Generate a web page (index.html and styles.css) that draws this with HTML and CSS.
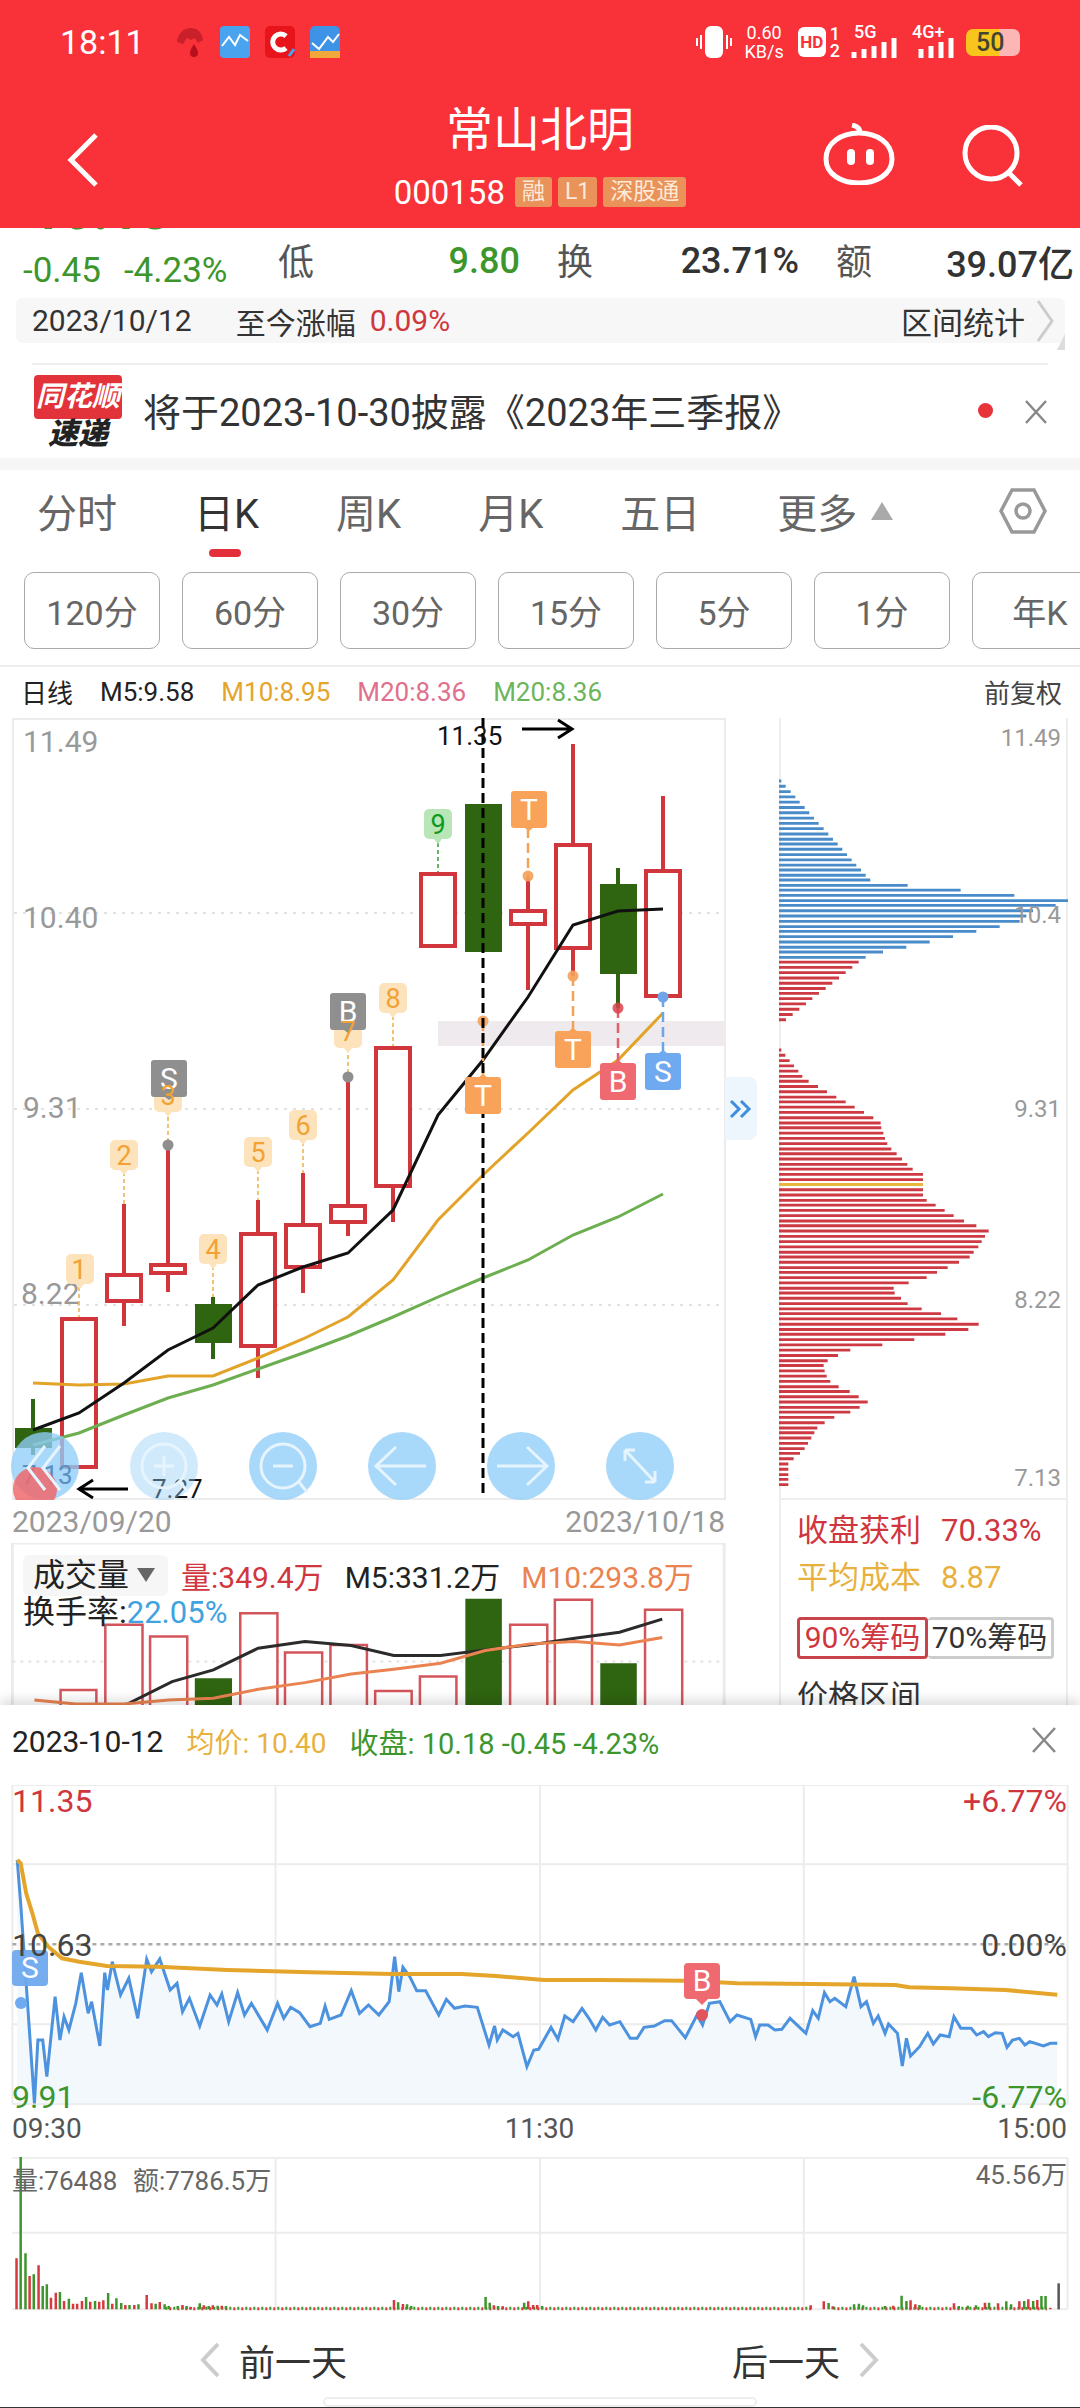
FILE: index.html
```html
<!DOCTYPE html>
<html lang="zh-CN">
<head>
    <meta charset="UTF-8">
    <meta name="viewport" content="width=device-width, initial-scale=1.0">
    <title>常山北明 000158</title>
    <link rel="stylesheet" href="styles.css">
</head>
<body>
    <header class="top">
        <div class="status-bar">
            <span class="clock">18:11</span>
            <div class="app-icons">
                <svg width="30" height="32" viewBox="0 0 30 32"><path d="M2 16C3 6 10 2 16 2s11 4 12 12l-5 3-3-5-4 2-4-2-4 6z" fill="#c9202a"/><path d="M19 18c3 5 4 7 4 9a4 4 0 0 1-8 0c0-2 1-4 4-9z" fill="#b5101c"/></svg>
                <svg width="30" height="32" viewBox="0 0 30 32"><rect width="30" height="32" rx="4" fill="#4aa3ee"/><path d="M2 20l7-9 6 8 5-10 8 6" fill="none" stroke="#fff" stroke-width="2"/></svg>
                <svg width="30" height="32" viewBox="0 0 30 32"><rect width="30" height="32" rx="5" fill="#e8141c"/><path d="M21 10a8 8 0 1 0 0 12" fill="none" stroke="#fff" stroke-width="5"/><path d="M24 30l5-7" stroke="#4aa3ee" stroke-width="3"/></svg>
                <svg width="30" height="32" viewBox="0 0 30 32"><rect width="30" height="32" rx="5" fill="#3f93e6"/><rect y="25" width="30" height="7" fill="#f0a83a"/><path d="M2 17l7 6 9-12 5 5 6-8" fill="none" stroke="#fff" stroke-width="2"/></svg>
            </div>
            <div class="sys-icons">
                <svg width="36" height="32" viewBox="0 0 36 32"><rect x="9" y="0" width="18" height="32" rx="6" fill="#fff"/><path d="M1 12v8M5 9v14M31 9v14M35 12v8" stroke="#fff" stroke-width="2"/></svg>
                <div class="speed"><span>0.60</span><span>KB/s</span></div>
                <span class="hd">HD</span>
                <div class="sim-no"><span>1</span><span>2</span></div>
                <div class="signal">
                    <span class="net">5G</span>
                    <svg width="46" height="20" viewBox="0 0 46 20"><path d="M3 14v6M13 11v9M23 8v12M33 4v16M43 0v20" stroke="#fff" stroke-width="5"/></svg>
                </div>
                <div class="signal sig-two">
                    <span class="net">4G+</span>
                    <svg width="38" height="20" viewBox="0 0 38 20"><path d="M3 11v9M13 8v12M23 4v16M33 0v20" stroke="#fff" stroke-width="5"/></svg>
                </div>
                <span class="battery">50</span>
            </div>
        </div>
        <div class="nav">
            <svg class="back" width="34" height="56" viewBox="0 0 34 56"><path d="M30 3L5 28l25 25" fill="none" stroke="#fff" stroke-width="5"/></svg>
            <div class="stock">
                <h1>常山北明</h1>
                <div class="stock-code">
                    <span class="code">000158</span>
                    <span class="flag">融</span>
                    <span class="flag">L1</span>
                    <span class="flag">深股通</span>
                </div>
            </div>
            <div class="nav-icons">
                <svg class="robot" width="72" height="62" viewBox="0 0 72 62"><path d="M3 36C3 20 18 10 36 10s33 10 33 26c0 15-15 24-33 24S3 51 3 36z" fill="none" stroke="#fff" stroke-width="5"/><path d="M37 10c0-4-3-7-8-8" fill="none" stroke="#fff" stroke-width="5"/><rect x="24" y="26" width="8" height="16" rx="4" fill="#fff"/><rect x="43" y="26" width="8" height="16" rx="4" fill="#fff"/></svg>
                <svg width="64" height="62" viewBox="0 0 64 62"><circle cx="30" cy="28" r="26" fill="none" stroke="#fff" stroke-width="5"/><path d="M46 46l14 14" stroke="#fff" stroke-width="5"/></svg>
            </div>
        </div>
    </header>

    <section class="quote">
        <div class="quote-left">
            <div class="price">10.18</div>
            <div class="change"><span>-0.45</span><span>-4.23%</span></div>
        </div>
        <div class="stat"><span class="stat-label">低</span><span class="stat-value green">9.80</span></div>
        <div class="stat"><span class="stat-label">换</span><span class="stat-value">23.71%</span></div>
        <div class="stat stat-last"><span class="stat-label">额</span><span class="stat-value">39.07亿</span></div>
    </section>

    <div class="range-bar">
        <span class="range-date">2023/10/12</span>
        <span class="range-label">至今涨幅</span>
        <span class="red">0.09%</span>
        <span class="range-link">区间统计</span>
        <svg width="20" height="44" viewBox="0 0 20 44"><path d="M3 2l14 20L3 42" fill="none" stroke="#ccc" stroke-width="3"/></svg>
    </div>

    <div class="news">
        <div class="news-logo">
            <span class="logo-top">同花顺</span>
            <span class="logo-bottom">速递</span>
        </div>
        <span class="news-text">将于2023-10-30披露《2023年三季报》</span>
        <span class="news-dot"></span>
        <svg width="24" height="24" viewBox="0 0 24 24"><path d="M2 1l20 22M22 1L2 23" stroke="#888" stroke-width="2.5"/></svg>
    </div>

    <nav class="tabs">
        <span class="tab">分时</span>
        <span class="tab active">日K</span>
        <span class="tab">周K</span>
        <span class="tab">月K</span>
        <span class="tab">五日</span>
        <span class="tab">更多<i class="tab-caret"></i></span>
        <svg class="tab-gear" width="50" height="48" viewBox="0 0 50 48"><path d="M14 3h22l11 21-11 21H14L3 24z" fill="none" stroke="#999" stroke-width="3.5"/><circle cx="25" cy="24" r="7" fill="none" stroke="#999" stroke-width="3.5"/></svg>
    </nav>

    <div class="periods">
        <button class="period">120分</button>
        <button class="period">60分</button>
        <button class="period">30分</button>
        <button class="period">15分</button>
        <button class="period">5分</button>
        <button class="period">1分</button>
        <button class="period">年K</button>
    </div>

    <div class="legend">
        <span class="legend-name">日线</span>
        <span>M5:9.58</span>
        <span class="c-orange">M10:8.95</span>
        <span class="c-pink">M20:8.36</span>
        <span class="c-green">M20:8.36</span>
        <span class="legend-right">前复权</span>
    </div>

    <div class="chart-row">
        <div class="chart-left">
            <svg class="kline" width="760" height="782" viewBox="0 718 760 782">
                <defs>
                    <symbol id="tag" viewBox="0 0 28 36" width="28" height="36" overflow="visible">
                        <path d="M5 0h18a5 5 0 0 1 5 5v20a5 5 0 0 1-5 5h-5l-4 5-4-5H5a5 5 0 0 1-5-5V5a5 5 0 0 1 5-5z"/>
                    </symbol>
                    <symbol id="flag-down" viewBox="0 0 36 40" width="36" height="40" overflow="visible">
                        <path d="M3 0h30a3 3 0 0 1 3 3v31a3 3 0 0 1-3 3H22l-4 3-4-3H3a3 3 0 0 1-3-3V3a3 3 0 0 1 3-3z"/>
                    </symbol>
                    <symbol id="flag-up" viewBox="0 0 36 40" width="36" height="40" overflow="visible">
                        <path d="M3 3h11l4-3 4 3h11a3 3 0 0 1 3 3v31a3 3 0 0 1-3 3H3a3 3 0 0 1-3-3V6a3 3 0 0 1 3-3z"/>
                    </symbol>
                </defs>
                <rect class="frame" x="13" y="719" width="712" height="780"/>
                <path class="grid-dots" d="M14 913H724M14 1109H724M14 1305H724"/>
                <rect class="band" x="438" y="1021" width="287" height="25"/>
                <text class="axis" x="23" y="752">11.49</text>
                <text class="axis" x="23" y="928">10.40</text>
                <text class="axis" x="23" y="1118">9.31</text>
                <text class="axis" x="21" y="1304">8.22</text>

                <path class="wick-dn" d="M33 1399V1455M213 1297V1359M483 804V952M618 868V1008"/>
                <path class="wick-up" d="M124 1204V1326M168 1145V1292M258 1200V1378M303 1173V1293M348 1077V1236M393 1186V1222M528 877V990M573 744V976M663 796V871"/>
                <rect class="body-dn" x="15" y="1428" width="37" height="20"/>
                <rect class="body-dn" x="195" y="1304" width="37" height="39"/>
                <rect class="body-dn" x="465" y="804" width="37" height="148"/>
                <rect class="body-dn" x="600" y="884" width="37" height="90"/>
                <rect class="body-up" x="62" y="1319" width="34" height="148"/>
                <rect class="body-up" x="107" y="1275" width="34" height="26"/>
                <rect class="body-up" x="151" y="1265" width="34" height="8"/>
                <rect class="body-up" x="241" y="1234" width="34" height="112"/>
                <rect class="body-up" x="286" y="1225" width="34" height="42"/>
                <rect class="body-up" x="331" y="1206" width="34" height="16"/>
                <rect class="body-up" x="376" y="1048" width="34" height="138"/>
                <rect class="body-up" x="421" y="874" width="34" height="72"/>
                <rect class="body-up" x="511" y="911" width="34" height="13"/>
                <rect class="body-up" x="556" y="845" width="34" height="103"/>
                <rect class="body-up" x="646" y="871" width="34" height="125"/>

                <polyline class="ma ma20" points="33,1445 79,1433 124,1415 168,1398 213,1385 258,1369 303,1353 348,1336 393,1317 438,1297 483,1278 528,1260 573,1235 618,1217 663,1194"/>
                <polyline class="ma ma10" points="33,1383 79,1385 124,1384 168,1376 213,1376 258,1358 303,1339 348,1317 393,1280 438,1220 483,1175 528,1133 573,1090 618,1060 663,1013"/>
                <polyline class="ma ma5" points="33,1430 79,1413 124,1383 168,1350 213,1328 258,1285 303,1267 348,1253 393,1210 438,1115 483,1060 528,997 573,925 618,911 663,909"/>

                <path class="tail tail-o" d="M79 1287V1317M124 1172V1204M213 1266V1297M258 1170V1200M303 1142V1173M393 1016V1046M168 1110V1145M348 1048V1077"/>
                <path class="tail tail-g" d="M438 843V872"/>
                <path class="tail tail-t" d="M528 828V877M573 976V1031M483 1021V1077"/>
                <path class="tail tail-b" d="M618 1008V1063"/>
                <path class="tail tail-s" d="M663 997V1053"/>
                <circle class="dot-o" cx="528" cy="876" r="5.5"/>
                <circle class="dot-o" cx="573" cy="976" r="5.5"/>
                <circle class="dot-o" cx="483" cy="1021" r="5.5"/>
                <circle class="dot-r" cx="618" cy="1008" r="5.5"/>
                <circle class="dot-b" cx="663" cy="997" r="5.5"/>
                <circle class="dot-gray" cx="348" cy="1077" r="5.5"/>
                <circle class="dot-gray" cx="168" cy="1145" r="5.5"/>

                <path class="cross" d="M483 718V1496"/>

                <use class="tag-o" href="#tag" x="66" y="1254"/><text class="tag-no" x="79" y="1279">1</text>
                <use class="tag-o" href="#tag" x="110" y="1140"/><text class="tag-no" x="124" y="1165">2</text>
                <use class="tag-o" href="#tag" x="199" y="1234"/><text class="tag-no" x="213" y="1259">4</text>
                <use class="tag-o" href="#tag" x="244" y="1137"/><text class="tag-no" x="258" y="1162">5</text>
                <use class="tag-o" href="#tag" x="289" y="1110"/><text class="tag-no" x="303" y="1135">6</text>
                <use class="tag-o" href="#tag" x="379" y="983"/><text class="tag-no" x="393" y="1008">8</text>
                <use class="tag-g" href="#tag" x="424" y="809"/><text class="tag-no tag-no-g" x="438" y="834">9</text>

                <use class="tag-o" href="#tag" x="154" y="1082"/>
                <use class="tag-o" href="#tag" x="334" y="1018"/>
                <use class="flag-gray" href="#flag-down" x="330" y="993"/><text class="flag-text" x="348" y="1022">B</text>
                <use class="flag-gray" href="#flag-down" x="151" y="1060"/><text class="flag-text" x="169" y="1089">S</text>
                <text class="tag-no" x="168" y="1105">3</text>
                <text class="tag-no" x="348" y="1041">7</text>
                <use class="flag-orange" href="#flag-down" x="511" y="791"/><text class="flag-text" x="529" y="820">T</text>
                <use class="flag-orange" href="#flag-up" x="555" y="1028"/><text class="flag-text" x="573" y="1060">T</text>
                <use class="flag-orange" href="#flag-up" x="465" y="1074"/><text class="flag-text" x="483" y="1106">T</text>
                <use class="flag-red" href="#flag-up" x="600" y="1060"/><text class="flag-text" x="618" y="1092">B</text>
                <use class="flag-blue" href="#flag-up" x="645" y="1050"/><text class="flag-text" x="663" y="1082">S</text>

                <text class="hilo" x="437" y="745">11.35</text>
                <path class="hilo-arrow" d="M522 729H572M558 720l14 9-14 9"/>
                <text class="hilo" x="152" y="1498">7.27</text>
                <path class="hilo-arrow" d="M128 1489H79M93 1480l-14 9 14 9"/>

                <circle class="bubble" cx="45" cy="1466" r="34"/>
                <text class="bubble-no" x="22" y="1484">7.13</text>
                <circle class="bubble-red" cx="35" cy="1489" r="22"/>
                <path class="bubble-ico" d="M45 1446l-17 22 17 22M60 1446l-17 22 17 22"/>
                <circle class="bubble bubble-soft" cx="164" cy="1466" r="34"/>
                <g class="bubble-ico">
                    <circle cx="164" cy="1466" r="22"/><path d="M164 1456v20M154 1466h20M180 1482l8 10"/>
                </g>
                <circle class="bubble" cx="283" cy="1466" r="34"/>
                <g class="bubble-ico">
                    <circle cx="283" cy="1466" r="22"/><path d="M273 1466h20M299 1482l8 10"/>
                </g>
                <circle class="bubble" cx="402" cy="1466" r="34"/>
                <path class="bubble-ico" d="M376 1466h50M396 1447l-20 19 20 19"/>
                <circle class="bubble" cx="521" cy="1466" r="34"/>
                <path class="bubble-ico" d="M497 1466h50M527 1447l20 19-20 19"/>
                <circle class="bubble" cx="640" cy="1466" r="34"/>
                <path class="bubble-ico" d="M625 1450l30 32M625 1450v11M625 1450h10M655 1482v-11M655 1482h-10"/>

                <path class="side-tab" d="M725 1077h24a8 8 0 0 1 8 8v47a8 8 0 0 1-8 8h-24z"/>
                <path class="side-arrow" d="M731 1101l8 8-8 8M741 1101l8 8-8 8"/>
            </svg>

            <div class="chart-dates"><span>2023/09/20</span><span>2023/10/18</span></div>

            <div class="volume">
                <svg width="760" height="162" viewBox="0 130 1104 485" preserveAspectRatio="none">
                    <path class="vol-frame" d="M18 615V130H1052V615"/>
                    <path class="vol-dots" d="M18 485H1052"/>
                    <path class="vol-box" d="M88 615V570H140V615M153 615V375H207V615M218 615V410H272V615M349 615V340H403V615M414 615V458H468V615M480 615V435H533V615M545 615V573H598V615M610 615V530H663V615M741 615V375H795V615M806 615V300H860V615M937 615V330H991V615"/>
                    <path class="vol-solid" d="M283 535H337V615H283zM676 297H729V615H676zM872 490H925V615H872z"/>
                    <polyline class="vol-ma vol-ma-k" points="185,612 250,545 310,510 375,445 443,425 510,437 572,467 640,467 705,450 770,435 835,415 900,397 962,358"/>
                    <polyline class="vol-ma vol-ma-o" points="50,600 110,612 180,612 245,600 310,595 375,568 443,548 510,522 572,508 640,490 705,452 770,432 835,425 900,435 962,413"/>
                </svg>
                <div class="vol-head">
                    <span class="vol-select">成交量<i class="vol-caret"></i></span>
                    <span class="red">量:349.4万</span>
                    <span>M5:331.2万</span>
                    <span class="c-coral">M10:293.8万</span>
                </div>
                <div class="vol-rate">换手率:<span class="c-sky">22.05%</span></div>
            </div>
        </div>

        <aside class="chart-right">
            <div class="chips">
                <svg width="289" height="782" viewBox="118 33 867 1477" preserveAspectRatio="none">
                    <path class="chip-blue" d="M118 152H125M118 162H138M118 172H153M118 182H167M118 192H180M118 202H195M118 212H209M118 222H223M118 232H237M118 242H252M118 252H266M118 262H280M118 271H294M118 281H308M118 291H322M118 301H336M118 311H350M118 320H364M118 330H378M118 339H392M118 349H504M118 358H663M118 368H824M118 378H985M118 387H948M118 397H880M118 407H860M118 417H840M118 427H780M118 436H710M118 446H640M118 456H570M118 466H500M118 475H430M118 485H378"/>
                    <path class="chip-red" d="M118 494H357M118 504H338M118 514H318M118 524H298M118 534H278M118 544H258M118 553H238M118 563H218M118 573H199M118 583H179M118 593H159M118 603H139M118 660H125M118 670H137M118 680H150M118 690H163M118 700H176M118 710H188M118 719H207M118 729H235M118 739H262M118 749H290M118 758H318M118 768H345M118 778H373M118 788H401M118 798H423M118 807H425M118 817H431M118 827H436M118 837H443M118 847H455M118 856H471M118 866H487M118 876H503M118 885H519M118 895H550M118 905H550M118 924H550M118 934H550M118 944H561M118 953H588M118 963H615M118 973H642M118 983H673M118 992H710M118 1002H747M118 1012H736M118 1022H726M118 1032H716M118 1042H702M118 1051H690M118 1061H658M118 1071H624M118 1080H592M118 1090H561M118 1100H507M118 1110H462M118 1119H465M118 1129H484M118 1139H504M118 1149H546M118 1158H604M118 1168H653M118 1178H717M118 1188H686M118 1197H617M118 1207H524M118 1217H428M118 1227H332M118 1237H295M118 1247H264M118 1256H252M118 1266H255M118 1276H261M118 1286H272M118 1296H297M118 1305H330M118 1315H357M118 1325H384M118 1335H360M118 1344H332M118 1354H284M118 1364H255M118 1374H233M118 1383H224M118 1393H215M118 1403H205M118 1413H195M118 1422H181M118 1432H162M118 1442H146M118 1452H146M118 1462H146M118 1471H146M118 1481H146"/>
                    <path class="chip-avg" d="M118 914H550"/>
                </svg>
                <span class="chip-price chip-p1">11.49</span>
                <span class="chip-price chip-p2">10.4</span>
                <span class="chip-price chip-p3">9.31</span>
                <span class="chip-price chip-p4">8.22</span>
                <span class="chip-price chip-p5">7.13</span>
            </div>
            <div class="chip-info">
                <div class="chip-row red"><span>收盘获利</span><span>70.33%</span></div>
                <div class="chip-row c-gold"><span>平均成本</span><span>8.87</span></div>
                <div class="chip-toggle">
                    <span class="toggle-on">90%筹码</span>
                    <span class="toggle-off">70%筹码</span>
                </div>
                <div class="chip-range">价格区间</div>
            </div>
        </aside>
    </div>

    <section class="popup">
        <div class="popup-head">
            <span class="popup-date">2023-10-12</span>
            <span class="c-gold popup-avg">均价: 10.40</span>
            <span class="green">收盘: 10.18 -0.45 -4.23%</span>
            <svg class="popup-close" width="26" height="26" viewBox="0 0 26 26"><path d="M2 1l22 24M24 1L2 25" stroke="#888" stroke-width="2.5"/></svg>
        </div>

        <div class="intraday">
            <svg width="1080" height="322" viewBox="0 45 1568 966" preserveAspectRatio="none">
                <path class="line-soft" d="M18 45H1550M18 283H1550M18 763H1550M18 1002H1550M18 45V1002M400 45V1002M784 45V1002M1167 45V1002M1550 45V1002"/>
                <path class="fill-area" d="M25 270L30 400L38 640L50 1000L55 810L62 810L68 920L80 680L87 810L93 740L100 780L110 700L118 608L128 730L133 695L145 828L152 608L156 660L163 575L175 675L187 625L200 745L213 568L220 605L232 567L247 660L257 640L265 725L275 685L290 768L305 675L315 705L322 672L332 755L345 668L355 735L365 700L388 780L403 700L412 745L422 712L435 728L450 770L465 760L472 708L478 748L495 735L510 662L522 730L535 705L550 735L565 695L573 560L579 665L585 592L595 620L605 662L618 662L637 735L648 688L660 715L675 708L693 712L710 825L718 768L722 810L730 780L745 800L752 790L765 890L775 840L782 838L800 772L810 808L820 738L832 755L845 715L855 745L865 780L875 742L885 765L900 755L915 805L925 805L935 772L950 768L965 752L975 752L995 803L1012 735L1020 765L1030 700L1045 695L1060 755L1070 735L1090 748L1097 800L1103 765L1115 765L1125 780L1135 778L1147 745L1170 790L1180 722L1188 745L1197 668L1205 695L1212 685L1228 710L1240 620L1250 710L1258 695L1268 760L1275 738L1285 790L1290 762L1303 790L1310 888L1316 805L1322 858L1335 830L1347 790L1355 822L1365 795L1378 800L1385 740L1395 775L1410 775L1418 795L1428 785L1435 800L1445 788L1455 790L1462 832L1470 810L1480 805L1488 825L1495 815L1515 828L1525 820L1535 820V1000H25Z"/>
                <path class="line-base" d="M18 523H1550"/>
                <path class="line-price" d="M25 270L30 400L38 640L50 1000L55 810L62 810L68 920L80 680L87 810L93 740L100 780L110 700L118 608L128 730L133 695L145 828L152 608L156 660L163 575L175 675L187 625L200 745L213 568L220 605L232 567L247 660L257 640L265 725L275 685L290 768L305 675L315 705L322 672L332 755L345 668L355 735L365 700L388 780L403 700L412 745L422 712L435 728L450 770L465 760L472 708L478 748L495 735L510 662L522 730L535 705L550 735L565 695L573 560L579 665L585 592L595 620L605 662L618 662L637 735L648 688L660 715L675 708L693 712L710 825L718 768L722 810L730 780L745 800L752 790L765 890L775 840L782 838L800 772L810 808L820 738L832 755L845 715L855 745L865 780L875 742L885 765L900 755L915 805L925 805L935 772L950 768L965 752L975 752L995 803L1012 735L1020 765L1030 700L1045 695L1060 755L1070 735L1090 748L1097 800L1103 765L1115 765L1125 780L1135 778L1147 745L1170 790L1180 722L1188 745L1197 668L1205 695L1212 685L1228 710L1240 620L1250 710L1258 695L1268 760L1275 738L1285 790L1290 762L1303 790L1310 888L1316 805L1322 858L1335 830L1347 790L1355 822L1365 795L1378 800L1385 740L1395 775L1410 775L1418 795L1428 785L1435 800L1445 788L1455 790L1462 832L1470 810L1480 805L1488 825L1495 815L1515 828L1525 820L1535 820"/>
                <path class="line-avg" d="M25 270L30 280L38 370L47 430L55 490L70 530L90 565L115 575L155 588L230 590L330 600L450 607L570 612L670 612L720 618L790 630L870 630L1000 632L1070 640L1180 642L1300 645L1320 652L1380 655L1460 660L1535 674"/>
            </svg>
            <span class="mark mark-s">S</span>
            <span class="mark-dot mark-dot-s"></span>
            <span class="mark mark-b">B</span>
            <span class="mark-dot mark-dot-b"></span>
            <span class="lab lab-tl red">11.35</span>
            <span class="lab lab-tr red">+6.77%</span>
            <span class="lab lab-ml">10.63</span>
            <span class="lab lab-mr">0.00%</span>
            <span class="lab lab-bl green">9.91</span>
            <span class="lab lab-br green">-6.77%</span>
        </div>

        <div class="times"><span>09:30</span><span>11:30</span><span>15:00</span></div>

        <div class="minute-vol">
            <svg width="1080" height="155" viewBox="0 108 1568 465" preserveAspectRatio="none">
                <path class="line-soft" d="M18 110H1550M18 335H1550M18 565H1550M400 110V565M784 110V565M1167 110V565M1550 110V565"/>
                <path class="tick-g tick-base" d="M240 562H1180M1210 562H1520"/>
                <path class="tick-r tick-base tick-shift" d="M240 563H1180M1210 563H1520"/>
                <path class="tick-r" d="M24 565V412M43 565V465M56 565V433M74 565V530M81 565V515M93 565V540M106 565V548M112 565V548M119 565V540M131 565V542M144 565V542M150 565V538M163 565V548M182 565V552M195 565V552M213 565V522M220 565V547M232 565V543M265 565V552M277 565V558M296 565V553M309 565V553M322 565V554M572 565V537M585 565V549M717 565V553M730 565V556M767 565V541M774 565V552M780 565V552M1177 565V553M1196 565V541M1209 565V556M1297 565V554M1322 565V538M1329 565V550M1385 565V547M1430 565V545M1449 565V547M1480 565V541M1493 565V535M1506 565V537M1525 565V560"/>
                <path class="tick-g" d="M30 565V108M37 565V397M49 565V460M62 565V495M68 565V490M87 565V513M100 565V533M125 565V528M138 565V540M157 565V516M169 565V532M176 565V546M188 565V552M201 565V550M226 565V548M239 565V550M245 565V555M258 565V555M271 565V555M290 565V547M303 565V555M316 565V554M328 565V555M578 565V544M591 565V550M597 565V555M705 565V528M711 565V545M723 565V555M761 565V545M787 565V555M1203 565V546M1240 565V550M1247 565V548M1253 565V553M1285 565V555M1309 565V524M1316 565V540M1335 565V552M1392 565V555M1405 565V554M1417 565V553M1436 565V545M1461 565V541M1468 565V550M1487 565V540M1500 565V540M1512 565V525M1518 565V525"/>
                <path class="tick-k" d="M1537 565V487"/>
            </svg>
            <span class="mv-left">量:76488</span>
            <span class="mv-left mv-amount">额:7786.5万</span>
            <span class="mv-max">45.56万</span>
        </div>

        <div class="day-nav">
            <div class="day-btn">
                <svg width="22" height="36" viewBox="0 0 22 36"><path d="M19 2L4 18l15 16" fill="none" stroke="#ccc" stroke-width="4"/></svg>
                <span>前一天</span>
            </div>
            <div class="day-btn">
                <span>后一天</span>
                <svg width="22" height="36" viewBox="0 0 22 36"><path d="M3 2l15 16L3 34" fill="none" stroke="#ccc" stroke-width="4"/></svg>
            </div>
        </div>

        <div class="home-bar"></div>
    </section>
</body>
</html>
```

FILE: styles.css
```css
:root {
    --red: #d0363e;
    --green: #3c962c;
    --candle-red: #d2363d;
    --candle-green: #2f6410;
    --gold: #e5a52a;
    --line: #ececec;
}
* {
    box-sizing: border-box;
}
body {
    margin: 0;
    width: 1080px;
    height: 2408px;
    overflow: hidden;
    background: #fff;
    color: #333;
    font-family: Roboto, "Noto Sans CJK SC", sans-serif;
}
.red { color: var(--red); }
.green { color: var(--green); }
.c-orange { color: #e5a52a; }
.c-pink { color: #e0708c; }
.c-green { color: #6db55a; }
.c-coral { color: #ea8350; }
.c-sky { color: #3fa3e0; }
.c-gold { color: #e8b13e; }

/* header */
.top {
    position: relative;
    z-index: 2;
    height: 228px;
    background: #f93139;
    color: #fff;
}
.status-bar {
    display: flex;
    align-items: center;
    height: 84px;
    padding: 0 60px;
}
.clock {
    font-size: 34px;
    width: 115px;
}
.app-icons {
    display: flex;
    gap: 15px;
}
.sys-icons {
    display: flex;
    align-items: center;
    margin-left: auto;
}
.speed {
    display: flex;
    flex-direction: column;
    margin-left: 13px;
    font-size: 18px;
    line-height: 19px;
    text-align: center;
}
.hd {
    width: 28px;
    margin-left: 14px;
    border-radius: 6px;
    background: #fff;
    color: #f93139;
    font-size: 17px;
    font-weight: 700;
    line-height: 30px;
    text-align: center;
}
.sim-no {
    display: flex;
    flex-direction: column;
    margin-left: 4px;
    font-size: 18px;
    font-weight: 500;
    line-height: 17px;
}
.signal {
    position: relative;
    width: 48px;
    height: 32px;
    margin-left: 11px;
    display: flex;
    align-items: flex-end;
}
.sig-two {
    width: 38px;
    margin-left: 19px;
}
.net {
    position: absolute;
    left: 3px;
    top: -5px;
    font-size: 18px;
    font-weight: 500;
    white-space: nowrap;
}
.sig-two .net {
    left: -6px;
}
.battery {
    width: 54px;
    height: 27px;
    margin-left: 10px;
    border-radius: 7px;
    background: linear-gradient(90deg, #f8c51c 62%, #fcb6b4 62%);
    color: #443;
    font-size: 25px;
    font-weight: 500;
    line-height: 27px;
    padding-left: 10px;
}
.nav {
    display: grid;
    grid-template-columns: 1fr auto 1fr;
    align-items: center;
    height: 144px;
    padding: 0 55px;
}
.back {
    margin: 8px 0 0 11px;
}
.stock {
    text-align: center;
}
.stock h1 {
    margin: 3px 0 0;
    font-size: 47px;
    font-weight: 400;
    line-height: 52px;
}
.stock-code {
    display: flex;
    align-items: center;
    gap: 6px;
    margin-top: 17px;
}
.code {
    font-size: 33px;
    margin-right: 4px;
}
.flag {
    padding: 0 7px;
    border-radius: 3px;
    background: #e9935a;
    color: #fde9d8;
    font-size: 23px;
    line-height: 30px;
}
.nav-icons {
    display: flex;
    justify-content: flex-end;
    align-items: center;
    gap: 66px;
}
.robot {
    margin-top: -4px;
}

/* quote */
.quote {
    display: flex;
    height: 70px;
    padding-left: 23px;
}
.quote-left {
    width: 255px;
    color: var(--green);
}
.price {
    margin-top: -42px;
    font-size: 54px;
    font-weight: 700;
    line-height: 50px;
    padding-left: 8px;
}
.change {
    display: flex;
    gap: 23px;
    margin-top: 15px;
    font-size: 35px;
    line-height: 40px;
    white-space: nowrap;
}
.stat {
    display: flex;
    justify-content: space-between;
    align-items: center;
    width: 242px;
    margin-right: 37px;
    height: 66px;
}
.stat-last {
    width: 238px;
    margin-right: 0;
}
.stat-label {
    margin-top: -4px;
    font-size: 36px;
    color: #555;
}
.stat-value {
    font-size: 36px;
    font-weight: 500;
}
.range-bar {
    position: relative;
    display: flex;
    align-items: center;
    height: 45px;
    margin: 0 15px 0 16px;
    padding: 0 10px 0 16px;
    border-radius: 6px;
    background: #f7f7f7;
    font-size: 30px;
}
.range-label {
    margin: 0 14px 0 44px;
}
.range-link {
    margin-left: auto;
    margin-right: 10px;
    font-size: 31px;
}
.range-bar::after {
    content: "";
    position: absolute;
    right: 0;
    bottom: -7px;
    border-left: 8px solid transparent;
    border-bottom: 16px solid #ddd;
}
.news {
    display: flex;
    align-items: center;
    height: 95px;
    margin: 20px 32px 0;
    padding-right: 0;
    border-top: 2px solid #eee;
}
.news-logo {
    display: flex;
    flex-direction: column;
    align-items: center;
    width: 90px;
    margin-left: 1px;
}
.logo-top {
    width: 88px;
    padding: 0 2px;
    background: #e2333a;
    border-radius: 4px;
    color: #fff;
    font-size: 28px;
    font-weight: 700;
    font-style: italic;
    line-height: 44px;
    text-align: center;
    white-space: nowrap;
}
.logo-bottom {
    color: #222;
    font-size: 30px;
    font-weight: 900;
    font-style: italic;
    line-height: 30px;
}
.news-text {
    margin-left: 20px;
    margin-top: -4px;
    font-size: 38px;
    white-space: nowrap;
}
.news-dot {
    width: 15px;
    height: 15px;
    margin: -2px 31px 0 auto;
    border-radius: 50%;
    background: #e8323a;
}

/* tabs */
.tabs {
    position: relative;
    display: flex;
    align-items: center;
    gap: 77px;
    height: 102px;
    padding: 0 32px 9px 37px;
    border-top: 12px solid #f6f6f6;
    font-size: 40px;
    color: #666;
}
.tab {
    position: relative;
    white-space: nowrap;
}
.tab.active {
    color: #333;
}
.tab.active::after {
    content: "";
    position: absolute;
    left: 15px;
    bottom: -17px;
    width: 32px;
    height: 8px;
    border-radius: 4px;
    background: #e4303a;
}
.tab-caret {
    display: inline-block;
    margin-left: 14px;
    vertical-align: 8px;
    border-left: 11px solid transparent;
    border-right: 11px solid transparent;
    border-bottom: 18px solid #aaa;
}
.tab-gear {
    margin-left: auto;
}
.periods {
    display: flex;
    gap: 22px;
    height: 107px;
    padding: 12px 0 18px 24px;
    overflow: hidden;
    border-bottom: 2px solid #eee;
}
.period {
    flex: 0 0 136px;
    height: 77px;
    padding: 0;
    border: 1px solid #aaa;
    border-radius: 10px;
    background: #fff;
    color: #666;
    font-family: inherit;
    font-size: 34px;
}
.legend {
    display: flex;
    align-items: center;
    gap: 27px;
    height: 51px;
    padding: 0 18px 2px 21px;
    font-size: 26px;
    color: #222;
}
.legend-right {
    margin-left: auto;
    color: #444;
}

/* kline */
.chart-row {
    display: flex;
    height: 987px;
    overflow: hidden;
}
.chart-left {
    width: 760px;
}
.kline {
    display: block;
}
.frame {
    fill: #fff;
    stroke: var(--line);
    stroke-width: 2;
}
.grid-dots {
    stroke: #e2e2e2;
    stroke-width: 2;
    stroke-dasharray: 3 6;
}
.band {
    fill: #eeeaed;
}
.axis {
    font-size: 30px;
    fill: #999;
}
.wick-up, .wick-dn {
    stroke-width: 4;
    fill: none;
}
.wick-up { stroke: var(--candle-red); }
.wick-dn { stroke: var(--candle-green); }
.body-up {
    fill: #fff;
    stroke: var(--candle-red);
    stroke-width: 4;
}
.body-dn {
    fill: var(--candle-green);
}
.ma {
    fill: none;
    stroke-width: 3;
}
.ma5 { stroke: #111; }
.ma10 { stroke: #e2a328; }
.ma20 { stroke: #6cae50; }
.tail {
    fill: none;
    stroke-width: 1.5;
    stroke-dasharray: 4 3;
}
.tail-o { stroke: #eeb04a; }
.tail-g { stroke: #3a9a3a; }
.tail-t { stroke: #f4a25a; stroke-width: 2.5; stroke-dasharray: 10 5; }
.tail-b { stroke: #e0606a; stroke-width: 2.5; stroke-dasharray: 10 5; }
.tail-s { stroke: #6ea4e8; stroke-width: 2.5; stroke-dasharray: 10 5; }
.dot-o { fill: #f4a25a; opacity: .9; }
.dot-r { fill: #d8424a; opacity: .85; }
.dot-b { fill: #6ea4e8; }
.dot-gray { fill: #8f8f8f; }
.cross {
    stroke: #000;
    stroke-width: 3;
    stroke-dasharray: 10 5;
}
.tag-o { fill: #fde3bb; }
.tag-g { fill: #b9e6b7; }
.tag-no {
    font-size: 27px;
    fill: #f2a233;
    text-anchor: middle;
}
.tag-no-g { fill: #0c9a1e; }
.flag-gray { fill: #8f8f8f; }
.flag-orange { fill: #f9a35a; }
.flag-red { fill: #ef6a70; }
.flag-blue { fill: #6fa9ef; }
.flag-text {
    font-size: 30px;
    fill: #fff;
    text-anchor: middle;
}
.hilo {
    font-size: 26px;
    fill: #111;
}
.hilo-arrow {
    fill: none;
    stroke: #000;
    stroke-width: 3;
}
.bubble {
    fill: #8fcdf9;
    opacity: .78;
}
.bubble-soft {
    opacity: .42;
}
.bubble-red {
    fill: #f0686c;
    opacity: .85;
}
.bubble-no {
    font-size: 26px;
    fill: #5a8fc0;
}
.bubble-ico, .bubble-ico circle, .bubble-ico path {
    fill: none;
    stroke: #e6f4fe;
    stroke-width: 3;
}
.side-tab {
    fill: #edf5fd;
}
.side-arrow {
    fill: none;
    stroke: #3f8ede;
    stroke-width: 3;
}
.chart-dates {
    display: flex;
    justify-content: space-between;
    height: 43px;
    padding: 4px 35px 0 12px;
    font-size: 30px;
    line-height: 36px;
    color: #999;
}

/* volume under the kline */
.volume {
    position: relative;
    height: 162px;
}
.volume svg {
    display: block;
}
.vol-frame {
    fill: none;
    stroke: var(--line);
    stroke-width: 3;
}
.vol-frame, .vol-box, .vol-ma, .vol-dots {
    vector-effect: non-scaling-stroke;
}
.vol-dots {
    stroke: #e2e2e2;
    stroke-width: 2;
    stroke-dasharray: 3 5;
}
.vol-box {
    fill: #fff;
    stroke: #d2555b;
    stroke-width: 2.5;
}
.vol-solid {
    fill: var(--candle-green);
}
.vol-ma {
    fill: none;
    stroke-width: 3;
}
.vol-ma-k { stroke: #2b2b2b; }
.vol-ma-o { stroke: #ea8350; }
.vol-head {
    position: absolute;
    left: 23px;
    top: 10px;
    display: flex;
    align-items: center;
    gap: 21px;
    font-size: 30px;
    white-space: nowrap;
    color: #222;
}
.vol-select {
    width: 145px;
    height: 41px;
    margin-right: -8px;
    padding-left: 10px;
    border-radius: 6px;
    background: #f6f6f6;
    font-size: 32px;
    line-height: 41px;
}
.vol-caret {
    display: inline-block;
    margin-left: 8px;
    vertical-align: 4px;
    border-left: 9px solid transparent;
    border-right: 9px solid transparent;
    border-top: 14px solid #666;
}
.vol-rate {
    position: absolute;
    left: 23px;
    top: 50px;
    font-size: 32px;
    line-height: 38px;
    color: #222;
}
.c-sky {
    font-size: 31px;
}

/* chip distribution */
.chart-right {
    width: 289px;
    margin-left: 19px;
    border-left: 2px solid #eee;
    border-right: 2px solid #eee;
}
.chips {
    position: relative;
    height: 782px;
    margin: 0 -2px;
    border-bottom: 2px solid #eee;
}
.chips svg {
    display: block;
}
.chip-blue, .chip-red, .chip-avg {
    fill: none;
    stroke-width: 5.4;
}
.chip-blue { stroke: #4a8cca; }
.chip-red { stroke: #cd3a43; }
.chip-avg { stroke: #e8b53d; }
.chip-price {
    position: absolute;
    right: 7px;
    font-size: 24px;
    line-height: 28px;
    color: #999;
}
.chip-p1 { top: 6px; }
.chip-p2 { top: 183px; }
.chip-p3 { top: 377px; }
.chip-p4 { top: 568px; }
.chip-p5 { top: 746px; }
.chip-info {
    padding: 11px 0 0 16px;
    font-size: 31px;
}
.chip-row {
    display: flex;
    gap: 20px;
    height: 47px;
    line-height: 40px;
}
.chip-toggle {
    display: flex;
    margin-top: 12px;
    font-size: 30px;
}
.toggle-on, .toggle-off {
    height: 42px;
    line-height: 36px;
    text-align: center;
    border-radius: 4px;
    white-space: nowrap;
}
.toggle-on {
    width: 131px;
    border: 3px solid #c8434a;
    color: var(--red);
}
.toggle-off {
    width: 126px;
    border: 3px solid #ccc;
    border-left: 0;
    color: #333;
}
.chip-range {
    margin-top: 18px;
    line-height: 40px;
}

/* popup */
.popup {
    position: relative;
    height: 703px;
    background: #fff;
    border-bottom: 1px solid #333;
    box-shadow: 0 -6px 10px rgba(0, 0, 0, .12);
}
.popup-head {
    position: relative;
    display: flex;
    gap: 23px;
    align-items: center;
    height: 80px;
    padding: 0 12px 8px;
    font-size: 29px;
    color: #222;
    white-space: nowrap;
}
.popup-date {
    font-size: 30px;
}
.popup-avg {
    font-size: 28px;
}
.popup-close {
    position: absolute;
    right: 23px;
    top: 22px;
}
.intraday {
    position: relative;
    height: 322px;
}
.intraday svg, .minute-vol svg {
    display: block;
}
.line-soft {
    fill: none;
    stroke: #ececec;
    stroke-width: 2;
    vector-effect: non-scaling-stroke;
}
.line-base {
    stroke: #aaa;
    stroke-width: 2.5;
    stroke-dasharray: 4 4;
    vector-effect: non-scaling-stroke;
}
.fill-area {
    fill: #f3f8fd;
}
.line-price {
    fill: none;
    stroke: #4d92de;
    stroke-width: 3;
    vector-effect: non-scaling-stroke;
}
.line-avg {
    fill: none;
    stroke: #e5a52a;
    stroke-width: 4;
    vector-effect: non-scaling-stroke;
}
.lab {
    position: absolute;
    font-size: 32px;
    line-height: 36px;
}
.lab-tl { left: 12px; top: -2px; }
.lab-tr { right: 13px; top: -2px; }
.lab-ml { left: 12px; top: 142px; color: #444; }
.lab-mr { right: 13px; top: 142px; color: #444; }
.lab-bl { left: 12px; top: 294px; }
.lab-br { right: 13px; top: 294px; }
.mark {
    position: absolute;
    width: 36px;
    height: 36px;
    border-radius: 4px;
    color: #fff;
    font-size: 30px;
    line-height: 36px;
    text-align: center;
}
.mark-s {
    left: 12px;
    top: 165px;
    background: #6fa9ef;
    opacity: .95;
}
.mark-b {
    left: 684px;
    top: 178px;
    background: #ef6a70;
}
.mark-b::after {
    content: "";
    position: absolute;
    left: 12px;
    top: 36px;
    border-left: 6px solid transparent;
    border-right: 6px solid transparent;
    border-top: 6px solid #ef6a70;
}
.mark-dot {
    position: absolute;
    width: 12px;
    height: 12px;
    border-radius: 50%;
}
.mark-dot-s {
    left: 15px;
    top: 212px;
    background: #6fa9ef;
}
.mark-dot-b {
    left: 696px;
    top: 224px;
    background: #e2555c;
}
.times {
    display: flex;
    justify-content: space-between;
    height: 50px;
    padding: 2px 13px 0 12px;
    font-size: 28px;
    line-height: 40px;
    color: #555;
}
.minute-vol {
    position: relative;
    height: 155px;
}
.tick-r, .tick-g, .tick-k {
    fill: none;
    stroke-width: 2.5;
    vector-effect: non-scaling-stroke;
}
.tick-r { stroke: #d8383f; }
.tick-g { stroke: #3c962c; }
.tick-k { stroke: #555; }
.tick-base {
    stroke-width: 3;
    stroke-dasharray: 2 6;
}
.tick-shift {
    stroke-dashoffset: 4;
}
.mv-left {
    position: absolute;
    left: 12px;
    top: 8px;
    font-size: 26px;
    line-height: 32px;
    color: #666;
}
.mv-amount {
    left: 133px;
}
.mv-max {
    position: absolute;
    right: 13px;
    top: 2px;
    font-size: 26px;
    line-height: 32px;
    color: #666;
}
.day-nav {
    display: flex;
    justify-content: space-between;
    height: 85px;
    padding: 30px 200px 0 199px;
}
.day-btn {
    display: flex;
    align-items: center;
    gap: 18px;
    height: 36px;
    font-size: 36px;
    color: #333;
}
.home-bar {
    width: 434px;
    height: 10px;
    margin: 0 auto;
    border: 2px solid #eee;
    border-radius: 6px;
}
```
